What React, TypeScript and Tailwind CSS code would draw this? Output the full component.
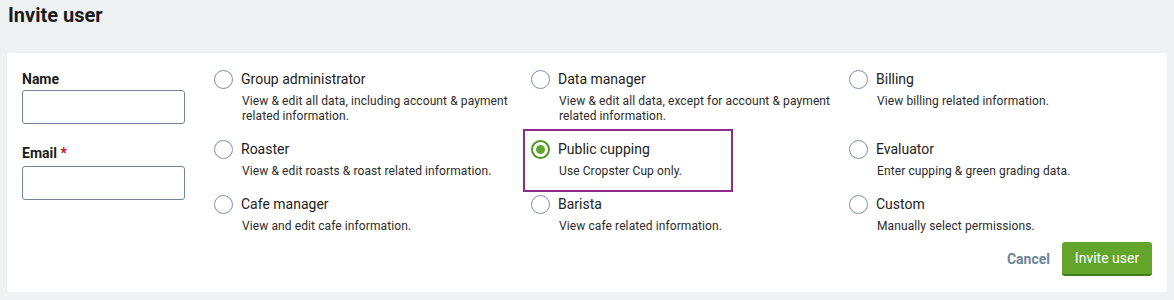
import { useState } from 'react';

type Role = {
  id: string;
  title: string;
  description: string;
};

const roles: Role[] = [
  { id: 'group-admin', title: 'Group administrator', description: 'View & edit all data, including account & payment related information.' },
  { id: 'data-manager', title: 'Data manager', description: 'View & edit all data, except for account & payment related information.' },
  { id: 'billing', title: 'Billing', description: 'View billing related information.' },
  { id: 'roaster', title: 'Roaster', description: 'View & edit roasts & roast related information.' },
  { id: 'public-cupping', title: 'Public cupping', description: 'Use Cropster Cup only.' },
  { id: 'evaluator', title: 'Evaluator', description: 'Enter cupping & green grading data.' },
  { id: 'cafe-manager', title: 'Cafe manager', description: 'View and edit cafe information.' },
  { id: 'barista', title: 'Barista', description: 'View cafe related information.' },
  { id: 'custom', title: 'Custom', description: 'Manually select permissions.' },
];

function RoleOption({
  role,
  checked,
  highlighted,
  onSelect,
}: {
  role: Role;
  checked: boolean;
  highlighted: boolean;
  onSelect: () => void;
}) {
  return (
    <label className="relative block cursor-pointer" onClick={onSelect}>
      {highlighted && (
        <div className="pointer-events-none absolute -top-[10px] -bottom-[13px] -left-[8px] w-[210px] border-2 border-[#8c2d8e]" />
      )}
      <div className="flex items-center gap-[8px]">
        {checked ? (
          <span className="flex h-[19px] w-[19px] shrink-0 items-center justify-center rounded-full border-2 border-[#4f9526]">
            <span className="h-[9px] w-[9px] rounded-full bg-[#5fa62b]" />
          </span>
        ) : (
          <span className="h-[19px] w-[19px] shrink-0 rounded-full border border-[#7f92a3] bg-white" />
        )}
        <span className="text-[14px] leading-[20px] text-[#222]">{role.title}</span>
      </div>
      <p className="mt-[5px] max-w-[310px] pl-[28px] text-[12px] leading-[15px] tracking-[0.1px] text-[#2b2b2b]">
        {role.description}
      </p>
    </label>
  );
}

export default function App() {
  const [selected, setSelected] = useState('public-cupping');

  return (
    <div className="min-h-[300px] bg-[#eff2f3] px-[7px] font-['Roboto','Liberation_Sans',sans-serif]">
      <h1 className="pt-[4px] pl-[1px] text-[20px] leading-[22px] font-bold text-[#1b1b1b]">Invite user</h1>
      <div className="mt-[27px] w-[1160px] rounded-[3px] bg-white px-[15px] pt-[16px] pb-[16px]">
        <div className="flex">
          <div className="w-[163px] shrink-0">
            <div className="text-[14px] leading-[20px] font-bold text-[#1b1b1b]">Name</div>
            <input
              type="text"
              className="mt-[1px] block h-[34px] w-[163px] rounded-[3px] border border-[#71859a] bg-white px-2 text-sm outline-none"
            />
            <div className="mt-[19px] text-[14px] leading-[20px] font-bold text-[#1b1b1b]">
              Email <span className="text-[#d0021b]">*</span>
            </div>
            <input
              type="email"
              className="mt-[3px] block h-[34px] w-[163px] rounded-[3px] border border-[#71859a] bg-white px-2 text-sm outline-none"
            />
          </div>
          <div className="ml-[29px] grid flex-1 grid-cols-[317px_318px_1fr] gap-y-[15px]">
            {roles.map((role) => (
              <RoleOption
                key={role.id}
                role={role}
                checked={selected === role.id}
                highlighted={role.id === 'public-cupping'}
                onSelect={() => setSelected(role.id)}
              />
            ))}
          </div>
        </div>
        <div className="mt-[8px] flex items-center justify-end gap-[12px]">
          <button type="button" className="text-[14px] font-bold text-[#6b8598]">
            Cancel
          </button>
          <button
            type="button"
            className="h-[34px] w-[90px] rounded-[3px] border-b-2 border-[#437a1c] bg-[#62a52a] text-[14px] font-normal text-white"
          >
            Invite user
          </button>
        </div>
      </div>
    </div>
  );
}
